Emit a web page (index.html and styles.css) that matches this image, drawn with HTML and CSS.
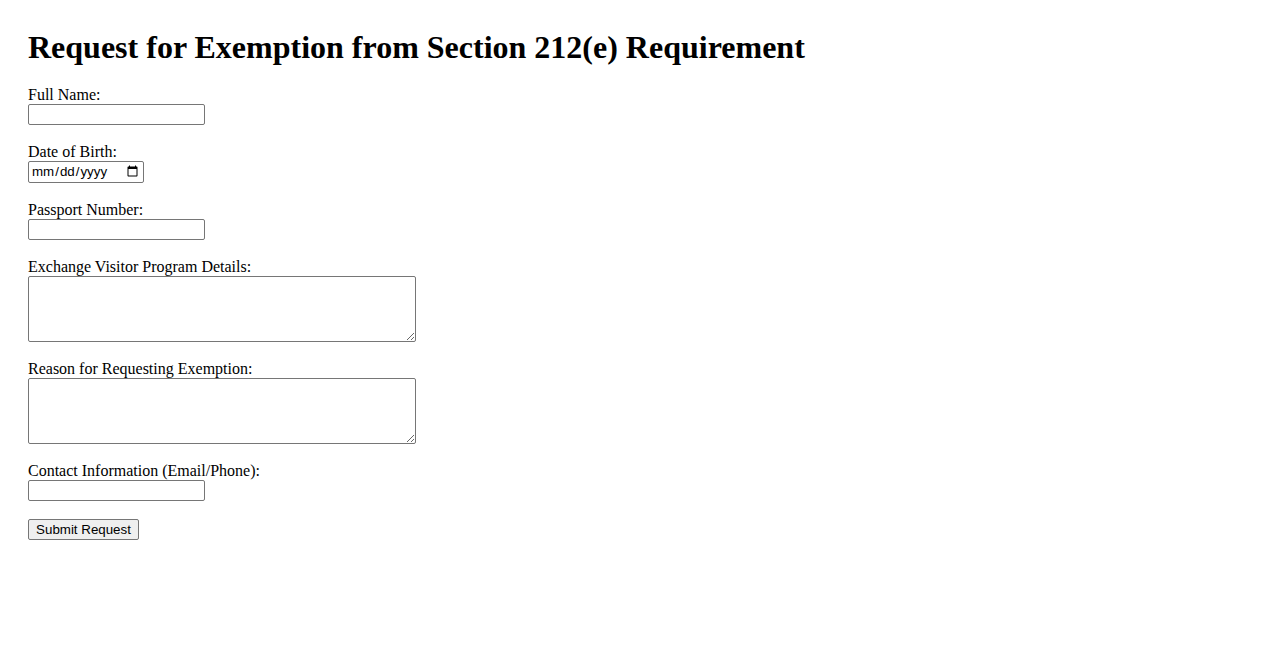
FILE: index.html
```html
<!DOCTYPE html>
<html lang="en">
<head>
<meta charset="utf-8">
<title>Request for Exemption from Section 212(e) Requirement</title>
<link rel="stylesheet" href="styles.css">
</head>
<body>
<main class="page">
  <h1 class="title">Request for Exemption from Section 212(e) Requirement</h1>
  <form class="form">
    <div class="field">
      <label for="name">Full Name:</label>
      <input class="text-input" type="text" id="name">
    </div>
    <div class="field">
      <label for="dob">Date of Birth:</label>
      <input class="date-input" type="date" id="dob">
    </div>
    <div class="field">
      <label for="passport">Passport Number:</label>
      <input class="text-input" type="text" id="passport">
    </div>
    <div class="field">
      <label for="program">Exchange Visitor Program Details:</label>
      <textarea class="area" id="program"></textarea>
    </div>
    <div class="field">
      <label for="reason">Reason for Requesting Exemption:</label>
      <textarea class="area" id="reason"></textarea>
    </div>
    <div class="field">
      <label for="contact">Contact Information (Email/Phone):</label>
      <input class="text-input" type="text" id="contact">
    </div>
    <button class="submit" type="submit">Submit Request</button>
  </form>
</main>
</body>
</html>
```
FILE: styles.css
```css
html, body {
  margin: 0;
  padding: 0;
  background: #ffffff;
}

body {
  font-family: "Liberation Serif", "Times New Roman", serif;
  font-size: 16px;
  color: #000000;
}

.page {
  padding: 29px 28px;
}

.title {
  font-size: 32px;
  font-weight: bold;
  margin: 0 0 20px 0;
  line-height: 37px;
}

.form {
  display: flex;
  flex-direction: column;
  align-items: flex-start;
}

.field {
  display: flex;
  flex-direction: column;
  align-items: flex-start;
  margin-bottom: 18px;
}

.field label {
  line-height: 18px;
}

.text-input,
.date-input,
.area {
  box-sizing: border-box;
  margin: 0;
  border: 1px solid #767676;
  border-radius: 2px;
  background: #ffffff;
  font-family: "Liberation Sans", Arial, sans-serif;
  font-size: 13.33px;
}

.text-input {
  width: 177px;
  height: 21px;
  padding: 1px 2px;
}

.date-input {
  width: 116px;
  height: 22px;
  padding: 1px 2px;
  color: #000000;
}

.area {
  width: 388px;
  height: 66px;
  padding: 2px;
  resize: both;
  font-family: "Liberation Mono", monospace;
}

.submit {
  box-sizing: border-box;
  margin: 0;
  width: 111px;
  height: 21px;
  padding: 1px 6px;
  border: 1px solid #767676;
  border-radius: 2px;
  background: #efefef;
  font-family: "Liberation Sans", Arial, sans-serif;
  font-size: 13.33px;
  color: #000000;
  line-height: 15px;
}
```
